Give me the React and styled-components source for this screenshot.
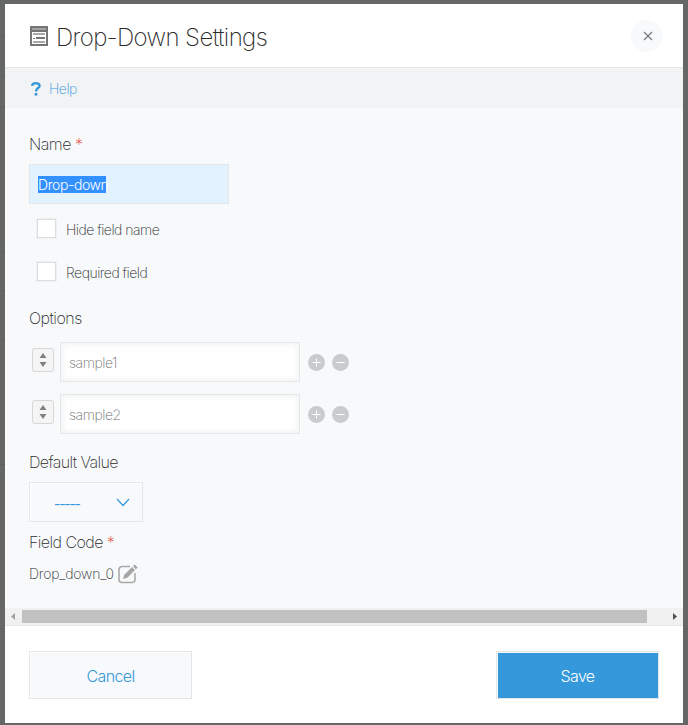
import React, { useState } from "react";
import styled, { createGlobalStyle } from "styled-components";

const GlobalStyle = createGlobalStyle`
    * {
        box-sizing: border-box;
    }
    body {
        margin: 0;
        background: #656766;
        color: #2a2a2a;
        font-family: Inter, "Liberation Sans", sans-serif;
        font-weight: 250;
        overflow: hidden;
    }
    button, input {
        font: inherit;
        color: inherit;
    }
`;

const Backdrop = styled.div`
    height: 725px;
    padding: 4px 5px 2px;
    background:
        linear-gradient(#5d5f5e, #5d5f5e) 0 36px / 5px 1px no-repeat,
        linear-gradient(#5d5f5e, #5d5f5e) 0 75px / 5px 1px no-repeat,
        linear-gradient(#5d5f5e, #5d5f5e) 0 107px / 5px 1px no-repeat,
        linear-gradient(#5d5f5e, #5d5f5e) 0 251px / 5px 1px no-repeat,
        linear-gradient(#5d5f5e, #5d5f5e) 0 290px / 5px 1px no-repeat,
        linear-gradient(#5d5f5e, #5d5f5e) 0 340px / 5px 1px no-repeat,
        linear-gradient(#5d5f5e, #5d5f5e) 0 464px / 5px 1px no-repeat,
        #656766;
`;

const Dialog = styled.div`
    display: flex;
    flex-direction: column;
    height: 719px;
    background: #fff;
`;

const Header = styled.header`
    display: flex;
    align-items: center;
    height: 64px;
    padding: 0 20px 0 25px;
    border-bottom: 1px solid #e3e5e6;
    svg {
        display: block;
    }
`;

const Title = styled.h1`
    flex: 1;
    margin: 4px 0 0 8px;
    font-size: 24px;
    font-weight: 200;
    line-height: 32px;
    letter-spacing: -0.6px;
`;

const CloseButton = styled.button`
    display: flex;
    align-items: center;
    justify-content: center;
    width: 32px;
    height: 32px;
    padding: 0 0 0 2px;
    border: 0;
    border-radius: 50%;
    background: #f7f9fa;
`;

const HelpBar = styled.div`
    display: flex;
    align-items: center;
    height: 40px;
    padding: 1px 0 0 26px;
    background: #f1f3f5;
    color: #3498db;
    font-size: 14px;
    letter-spacing: -0.5px;
    svg {
        margin: 0 8px 0 0;
    }
`;

const Body = styled.div`
    display: flex;
    flex-direction: column;
    align-items: flex-start;
    height: 500px;
    padding: 26px 24px 0;
    background: #f7f9fb;
`;

const Label = styled.div`
    margin-top: ${({ $top }) => $top || 0}px;
    height: 20px;
    font-size: 16px;
    line-height: 20px;
    letter-spacing: ${({ $spacing }) => $spacing || -0.5}px;
    white-space: pre;
`;

const Required = styled.span`
    color: #e74c3c;
`;

const NameInput = styled.div`
    width: 200px;
    height: 40px;
    margin-top: 10px;
    padding: 11px 8px;
    border: 1px solid #e3e7e8;
    background: #e2f2fe;
    font-size: 14px;
    line-height: 17px;
`;

const Selection = styled.span`
    display: block;
    width: 68px;
    height: 17px;
    background: #3390ff;
    color: #fff;
    font-weight: 300;
    letter-spacing: -0.4px;
    white-space: nowrap;
`;

const CheckRow = styled.label`
    display: flex;
    align-items: center;
    height: 20px;
    margin: ${({ $top }) => $top}px 0 0 8px;
    font-size: 14px;
    letter-spacing: -0.5px;
    span {
        margin: 3px 0 0 10px;
    }
`;

const CheckBox = styled.i`
    width: 19px;
    height: 19px;
    border: 1px solid #dcdfe0;
    background: #fff;
    box-shadow: 0 0 0 1px #eef0f1;
`;

const OptionRow = styled.div`
    display: flex;
    height: 40px;
    margin-top: ${({ $top }) => $top}px;
    padding-left: 3px;
`;

const DragHandle = styled.div`
    display: flex;
    align-items: center;
    justify-content: center;
    width: 22px;
    height: 24px;
    margin-top: 6px;
    border: 1px solid #d5d7d8;
    border-radius: 3px;
    background: #f5f5f5;
`;

const OptionInput = styled.input`
    width: 240px;
    height: 40px;
    margin: 0 8px 0 6px;
    padding: 1px 8px 0;
    border: 1px solid #e3e7e8;
    border-radius: 0;
    background: #fff;
    box-shadow: inset 2px 2px 6px #f2f3f4, inset -2px -2px 6px #f5f5f5;
    color: #707070;
    font-size: 14px;
    letter-spacing: -0.45px;
    outline: none;
`;

const RoundButton = styled.button`
    width: 17px;
    height: 17px;
    margin: 12px 7px 0 0;
    padding: 0;
    border: 0;
    border-radius: 50%;
    background: #c9cbcc;
    svg {
        display: block;
    }
`;

const Select = styled.div`
    display: flex;
    justify-content: space-between;
    align-items: center;
    width: 114px;
    height: 40px;
    margin-top: 10px;
    padding: 0 12px 0 24px;
    border: 1px solid #e3e7e8;
    box-shadow: inset 1px 1px 0 #fff;
    color: #3498db;
    font-size: 14px;
    font-weight: 400;
    letter-spacing: -1.3px;
    span {
        margin-top: 2px;
    }
`;

const FieldCode = styled.div`
    display: flex;
    align-items: center;
    height: 22px;
    margin-top: 11px;
    font-size: 14px;
    letter-spacing: -0.2px;
    span {
        margin-top: -2px;
    }
    svg {
        margin-left: 4px;
    }
`;

const ScrollBar = styled.div`
    display: grid;
    grid-template-columns: 17px 625px 36px;
    align-items: center;
    height: 18px;
    border-bottom: 1px solid #e3e5e6;
    background: #f1f1f1;
    svg {
        display: block;
    }
`;

const Thumb = styled.div`
    height: 13px;
    background: #c1c1c1;
`;

const Footer = styled.footer`
    display: flex;
    justify-content: space-between;
    padding: 25px 24px 0;
`;

const Button = styled.button`
    width: 163px;
    height: 48px;
    padding: 2px 0 0;
    border: 1px solid #e3e7e8;
    background: ${({ $primary }) => ($primary ? "#3498db" : "#f7f9fa")};
    box-shadow: inset 1px 1px 0 ${({ $primary }) => ($primary ? "#f5f8fa" : "#fff")};
    color: ${({ $primary }) => ($primary ? "#fff" : "#3498db")};
    font-size: 16px;
    font-weight: 300;
    letter-spacing: -0.6px;
`;

const FormIcon = () => (
    <svg width="18" height="20" viewBox="0 0 18 20" shapeRendering="crispEdges">
        <path fill="#757575" d="M0 0h18v20H0z" />
        <path fill="#a2a2a2" d="M2 2h14v2H2z" />
        <path fill="#fff" d="M2 6h14v12H2z" />
        <path fill="#a9a9a9" d="M3 7h12v2H3zM3 15h12v2H3z" />
        <path fill="#757575" d="M3 12h2v1H3zM6 11h9v2H6z" />
    </svg>
);

const EditIcon = () => (
    <svg width="20" height="20" viewBox="0 0 20 20" fill="none">
        <path d="M12 2.500H4A3 3 0 0 0 1 5.500V15.500A3 3 0 0 0 4 18.500H14A3 3 0 0 0 17 15.500V9" stroke="#aaa" strokeWidth="1.600" />
        <path d="M5 15l1.300-4.300L14 3l3 3L9.300 13.700zM14.900 2.200L16.700.4l3 3L17.900 5.200z" fill="#a6a6a6" />
    </svg>
);

function Option({ value, top, onChange }) {
    return (
        <OptionRow $top={top}>
            <DragHandle>
                <svg width="8" height="16" viewBox="0 0 8 16" fill="#808080">
                    <path d="M4 1l3.500 5h-7zM4 15l3.500-5h-7z" />
                </svg>
            </DragHandle>
            <OptionInput value={value} onChange={onChange} />
            <RoundButton aria-label="Add">
                <svg width="17" height="17" stroke="#fff"><path d="M4.500 8.500h8M8.500 4.500v8" /></svg>
            </RoundButton>
            <RoundButton aria-label="Remove">
                <svg width="17" height="17" stroke="#fff"><path d="M4.500 8.500h8" /></svg>
            </RoundButton>
        </OptionRow>
    );
}

export default function App() {
    const [options, setOptions] = useState(["sample1", "sample2"]);

    const onChange = (index) => (ev) => {
        setOptions(options.map((option, i) => (i === index ? ev.target.value : option)));
    };

    return (
        <Backdrop>
            <GlobalStyle />
            <Dialog>
                <Header>
                    <FormIcon />
                    <Title>Drop-Down Settings</Title>
                    <CloseButton aria-label="Close">
                        <svg width="10" height="10" stroke="#777" strokeWidth="1.200"><path d="M1 1l8 8M9 1L1 9" /></svg>
                    </CloseButton>
                </Header>
                <HelpBar>
                    <svg width="10" height="14" viewBox="0 0 10 14" fill="none">
                        <path d="M1 3.800C1.300 2 2.900 1.200 4.800 1.200c2.200 0 3.800.9 3.800 2.700C8.600 6.200 5 6 5 9.400" stroke="#3498db" strokeWidth="2.300" />
                        <path d="M3.700 11h2.600v2.600H3.700z" fill="#3498db" />
                    </svg>
                    Help
                </HelpBar>
                <Body>
                    <Label>Name <Required>*</Required></Label>
                    <NameInput><Selection>Drop-down</Selection></NameInput>
                    <CheckRow $top={14}><CheckBox /><span>Hide field name</span></CheckRow>
                    <CheckRow $top={23}><CheckBox /><span>Required field</span></CheckRow>
                    <Label $top={27}>Options</Label>
                    {options.map((option, i) => (
                        <Option key={i} value={option} top={i ? 12 : 14} onChange={onChange(i)} />
                    ))}
                    <Label $top={18} $spacing={-0.6}>Default Value</Label>
                    <Select>
                        <span>-----</span>
                        <svg width="14" height="9" fill="none" stroke="#3498db" strokeWidth="1.200"><path d="M1 1l6 6.500L13 1" /></svg>
                    </Select>
                    <Label $top={10} $spacing={-0.55}>Field Code <Required>*</Required></Label>
                    <FieldCode><span>Drop_down_0</span><EditIcon /></FieldCode>
                </Body>
                <ScrollBar>
                    <svg width="17" height="17"><path d="M10 5v7L6 8.500z" fill="#a3a3a3" /></svg>
                    <Thumb />
                    <svg width="36" height="17"><path d="M26 5v7l4-3.500z" fill="#505050" /></svg>
                </ScrollBar>
                <Footer>
                    <Button>Cancel</Button>
                    <Button $primary>Save</Button>
                </Footer>
            </Dialog>
        </Backdrop>
    );
}
